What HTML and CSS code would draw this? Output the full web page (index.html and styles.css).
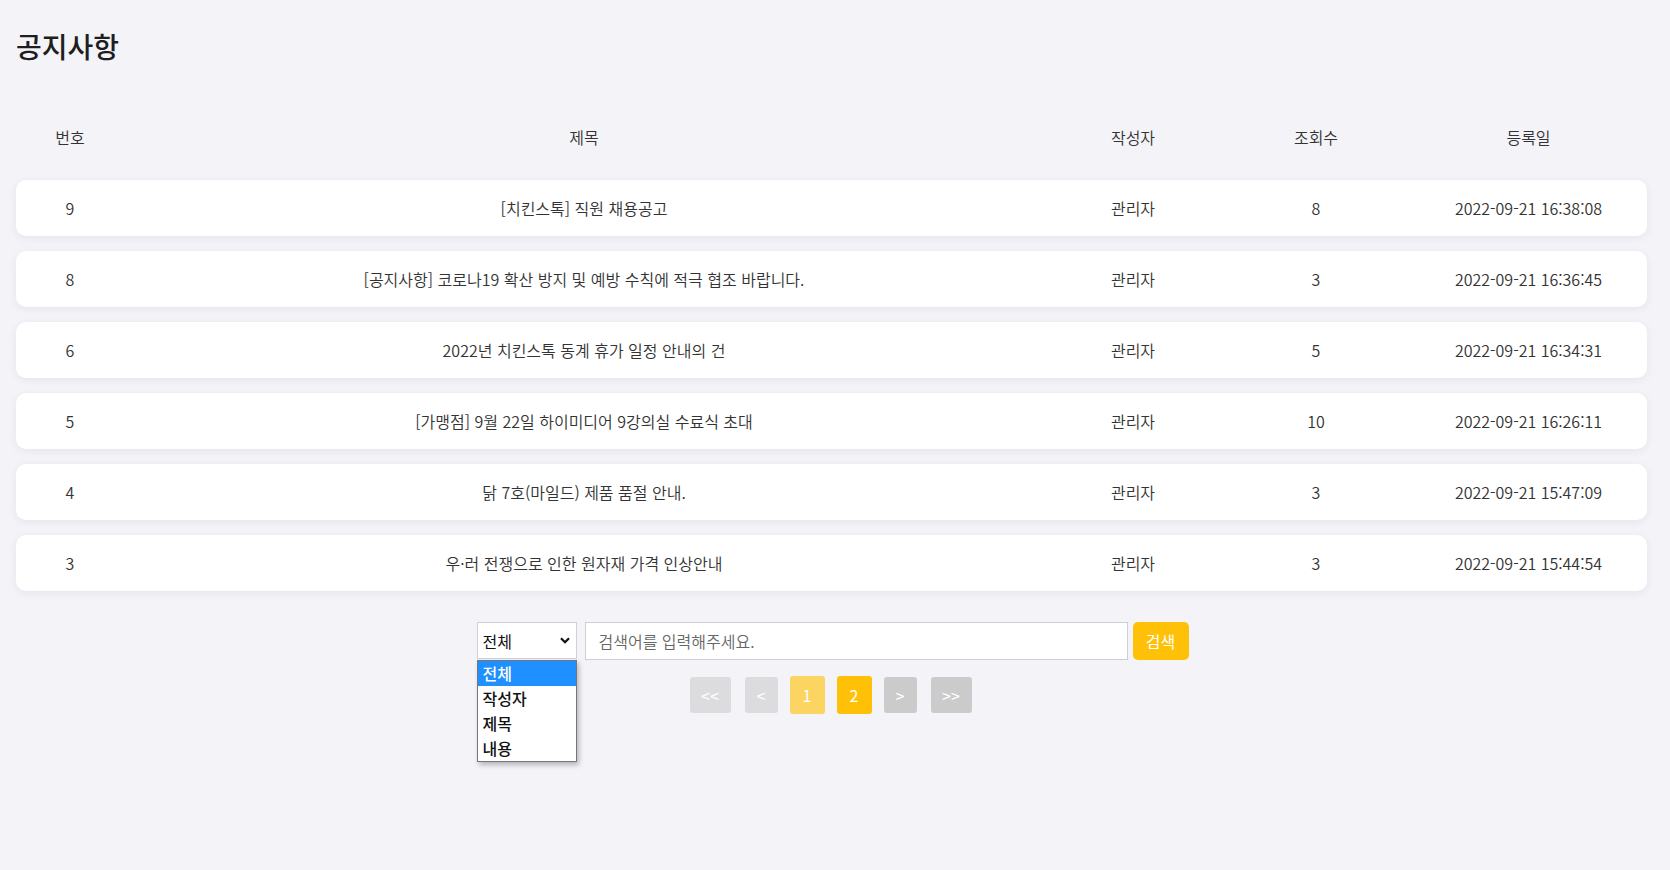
FILE: index.html
```html
<!DOCTYPE html>
<html lang="ko">
<head>
<meta charset="utf-8">
<title>공지사항</title>
<link rel="stylesheet" href="styles.css">
</head>
<body>
<div class="page">
  <h1 class="title">공지사항</h1>
  <div class="board">
    <div class="row head">
      <div class="cell">번호</div>
      <div class="cell">제목</div>
      <div class="cell">작성자</div>
      <div class="cell">조회수</div>
      <div class="cell">등록일</div>
    </div>
    <div class="row item">
      <div class="cell">9</div>
      <div class="cell">[치킨스톡] 직원 채용공고</div>
      <div class="cell">관리자</div>
      <div class="cell">8</div>
      <div class="cell">2022-09-21 16:38:08</div>
    </div>
    <div class="row item">
      <div class="cell">8</div>
      <div class="cell">[공지사항] 코로나19 확산 방지 및 예방 수칙에 적극 협조 바랍니다.</div>
      <div class="cell">관리자</div>
      <div class="cell">3</div>
      <div class="cell">2022-09-21 16:36:45</div>
    </div>
    <div class="row item">
      <div class="cell">6</div>
      <div class="cell">2022년 치킨스톡 동계 휴가 일정 안내의 건</div>
      <div class="cell">관리자</div>
      <div class="cell">5</div>
      <div class="cell">2022-09-21 16:34:31</div>
    </div>
    <div class="row item">
      <div class="cell">5</div>
      <div class="cell">[가맹점] 9월 22일 하이미디어 9강의실 수료식 초대</div>
      <div class="cell">관리자</div>
      <div class="cell">10</div>
      <div class="cell">2022-09-21 16:26:11</div>
    </div>
    <div class="row item">
      <div class="cell">4</div>
      <div class="cell">닭 7호(마일드) 제품 품절 안내.</div>
      <div class="cell">관리자</div>
      <div class="cell">3</div>
      <div class="cell">2022-09-21 15:47:09</div>
    </div>
    <div class="row item">
      <div class="cell">3</div>
      <div class="cell">우·러 전쟁으로 인한 원자재 가격 인상안내</div>
      <div class="cell">관리자</div>
      <div class="cell">3</div>
      <div class="cell">2022-09-21 15:44:54</div>
    </div>
  </div>

  <form class="search">
    <div class="select-wrap">
      <div class="select">
        <span>전체</span>
        <svg class="chev" width="10" height="7" viewBox="0 0 10 7"><path d="M1 1.2 L5 5.2 L9 1.2" fill="none" stroke="#111" stroke-width="2.2"/></svg>
      </div>
      <ul class="options">
        <li class="opt on">전체</li>
        <li class="opt">작성자</li>
        <li class="opt">제목</li>
        <li class="opt">내용</li>
      </ul>
    </div>
    <input class="query" type="text" placeholder="검색어를 입력해주세요.">
    <button class="go" type="button">검색</button>
  </form>

  <div class="pager">
    <a class="pg wide dim">&lt;&lt;</a>
    <a class="pg dim">&lt;</a>
    <a class="pg num light">1</a>
    <a class="pg num cur">2</a>
    <a class="pg gray">&gt;</a>
    <a class="pg wide gray">&gt;&gt;</a>
  </div>
</div>
</body>
</html>
```

FILE: styles.css
```css
* { box-sizing: border-box; }
html, body { margin: 0; padding: 0; }
body {
  background: #f3f3f8;
  font-family: "Noto Sans CJK KR", "Noto Sans", sans-serif;
  color: #333;
  width: 1670px;
  height: 870px;
  overflow: hidden;
}
.page {
  padding: 27px 23px 0 16px;
}
.title {
  margin: 0;
  font-size: 28px;
  font-weight: 500;
  line-height: 38px;
  color: #1e1e1e;
}
.board {
  margin-top: 44px;
  display: flex;
  flex-direction: column;
  gap: 15px;
}
.row {
  display: grid;
  grid-template-columns: 108px 920px 178px 188px 237px;
  height: 56px;
  align-items: center;
}
.cell {
  text-align: center;
  font-size: 16px;
  font-weight: 350;
  line-height: 24px;
  color: #333;
  white-space: nowrap;
}
.item {
  background: #fff;
  border-radius: 10px;
  box-shadow: 0 2px 8px rgba(40, 40, 80, 0.07);
}
.search {
  margin: 31px 0 0;
  display: flex;
  justify-content: center;
  align-items: flex-start;
  padding-left: 2px;
}
.select-wrap {
  position: relative;
  width: 100px;
  margin-right: 8px;
}
.select {
  height: 37px;
  background: #fff;
  border: 1px solid #cfcfd4;
  display: flex;
  align-items: center;
  justify-content: space-between;
  padding: 0 6px 0 5px;
  font-size: 16px;
  color: #111;
  font-weight: 400;
}
.options {
  position: absolute;
  left: 0;
  top: 38px;
  width: 100px;
  margin: 0;
  padding: 0;
  list-style: none;
  background: #fff;
  border: 1px solid #767676;
  box-shadow: 2px 3px 5px rgba(0, 0, 0, 0.25);
  z-index: 5;
}
.opt {
  height: 25px;
  line-height: 25px;
  padding-left: 5px;
  font-size: 16px;
  font-weight: 500;
  color: #111;
}
.opt.on {
  background: #1e90ff;
  color: #fff;
}
.query {
  width: 543px;
  height: 38px;
  border: 1px solid #cfcfd4;
  background: #fff;
  padding: 0 13px;
  font-family: inherit;
  font-size: 16px;
  font-weight: 350;
  outline: none;
  margin: 0 5px 0 0;
}
.query::placeholder { color: #666; }
.go {
  width: 56px;
  height: 38px;
  border: none;
  border-radius: 5px;
  background: #ffc107;
  color: #fff;
  font-family: inherit;
  font-size: 16px;
  font-weight: 400;
  padding: 0;
}
.pager {
  margin-top: 16px;
  display: flex;
  justify-content: center;
  align-items: center;
  gap: 12px;
  padding-right: 2px;
}
.pg {
  height: 36px;
  width: 33px;
  border-radius: 3px;
  color: #fff;
  font-size: 16px;
  font-weight: 400;
  display: flex;
  align-items: center;
  justify-content: center;
  text-decoration: none;
}
.pg.wide { width: 41px; }
.pg.wide.dim { margin-right: 2px; }
.pg.wide.gray { margin-left: 2px; }
.pg.num { width: 35px; height: 38px; }
.dim { background: #dcdcdf; }
.gray { background: #cbcbcb; }
.light { background: #fcd462; }
.cur { background: #ffc107; }
```
